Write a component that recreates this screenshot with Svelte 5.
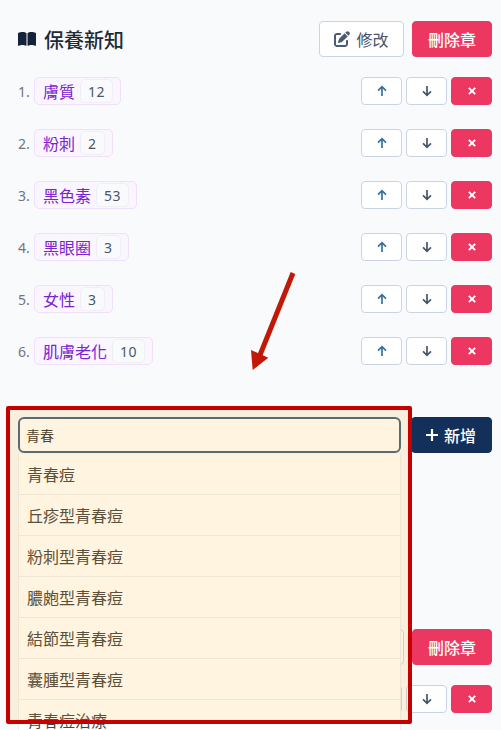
<script>
  const tags = [
    { name: '膚質', n: 12 },
    { name: '粉刺', n: 2 },
    { name: '黑色素', n: 53 },
    { name: '黑眼圈', n: 3 },
    { name: '女性', n: 3 },
    { name: '肌膚老化', n: 10 }
  ];
  const results = ['青春痘', '丘疹型青春痘', '粉刺型青春痘', '膿皰型青春痘', '結節型青春痘', '囊腫型青春痘', '青春痘治療'];
</script>

{#snippet rowButtons()}
  <div class="row-actions">
    <button class="btn small up" aria-label="上移">
      <svg viewBox="0 0 12 12"><path d="M6 11V2M2 5.6 6 1.6l4 4" /></svg>
    </button>
    <button class="btn small down" aria-label="下移">
      <svg viewBox="0 0 12 12"><path d="M6 1v9M2 6.4l4 4 4-4" /></svg>
    </button>
    <button class="btn small danger" aria-label="移除">
      <svg viewBox="0 0 12 12"><path d="M2.2 2.2l7.6 7.6M9.8 2.2l-7.6 7.6" /></svg>
    </button>
  </div>
{/snippet}

{#snippet chapterActions()}
  <div class="chapter-actions">
    <button class="btn edit">
      <svg viewBox="0 0 512 512"><path d="M471.6 21.7c-21.9-21.9-57.3-21.9-79.2 0L362.3 51.7l97.9 97.9 30.1-30.1c21.9-21.9 21.9-57.3 0-79.2L471.6 21.7zm-299.2 220c-6.1 6.1-10.8 13.6-13.5 21.9l-29.6 88.8c-2.9 8.6-.6 18.1 5.8 24.6s15.9 8.7 24.6 5.8l88.8-29.6c8.2-2.7 15.7-7.4 21.9-13.5L437.7 172.3 339.7 74.3 172.4 241.7zM96 64C43 64 0 107 0 160V416c0 53 43 96 96 96H352c53 0 96-43 96-96V320c0-17.7-14.3-32-32-32s-32 14.3-32 32v96c0 17.7-14.3 32-32 32H96c-17.7 0-32-14.3-32-32V160c0-17.7 14.3-32 32-32h96c17.7 0 32-14.3 32-32s-14.3-32-32-32H96z" /></svg>
      修改
    </button>
    <button class="btn danger big">刪除章</button>
  </div>
{/snippet}

<div class="page">
  <section class="chapter">
    <header class="chapter-head">
      <h2>
        <svg viewBox="0 0 576 512"><path d="M249.6 471.5c10.8 3.8 22.4-4.1 22.4-15.5V78.6c0-4.2-1.6-8.4-5-11C247.4 52 202.4 32 144 32C93.5 32 46.3 45.3 18.1 56.1C6.8 60.5 0 71.7 0 83.8V454.1c0 11.9 12.8 20.2 24.1 16.5C55.6 460.1 105.5 448 144 448c33.9 0 79 14 105.6 23.5zm76.8 0C353 462 398.1 448 432 448c38.5 0 88.4 12.1 119.9 22.6c11.3 3.8 24.1-4.6 24.1-16.5V83.8c0-12.1-6.8-23.3-18.1-27.6C529.7 45.3 482.5 32 432 32c-58.4 0-103.4 20-123 35.6c-3.3 2.6-5 6.8-5 11V456c0 11.4 11.7 19.3 22.4 15.5z" /></svg>
        保養新知
      </h2>
      {@render chapterActions()}
    </header>

    <ol class="tags">
      {#each tags as t, i}
        <li class="tag-row">
          <span class="idx">{i + 1}.</span>
          <span class="tag">{t.name}<span class="count">{t.n}</span></span>
          {@render rowButtons()}
        </li>
      {/each}
    </ol>

    <div class="add-row">
      <div class="search">
        <input value="青春" aria-label="搜尋標籤" />
        <ul class="results">
          {#each results as r}
            <li>{r}</li>
          {/each}
        </ul>
      </div>
      <button class="btn add">
        <svg viewBox="0 0 14 14"><path d="M7 1v12M1 7h12" /></svg>
        新增
      </button>
    </div>
  </section>

  <section class="chapter next">
    <header class="chapter-head">
      <h2></h2>
      {@render chapterActions()}
    </header>
    <div class="tag-row"><span class="idx"></span>{@render rowButtons()}</div>
  </section>

  <svg class="pointer" viewBox="0 0 80 120">
    <path d="M63 13 30 95" class="shaft" />
    <path d="M21 90 38.3 97.7 22.7 110Z" class="head" />
  </svg>
  <div class="highlight"></div>
</div>

<style>
  :global(body) {
    margin: 0;
    background: #f9fafc;
  }
  .page {
    position: relative;
    height: 730px;
    overflow: hidden;
    font-family: "Noto Sans", "Noto Sans CJK TC", sans-serif;
    color: #363636;
  }
  .chapter {
    padding: 21px 9px 0 18px;
  }
  .chapter-head {
    display: flex;
    align-items: center;
    justify-content: space-between;
    height: 36px;
  }
  h2 {
    margin: 0;
    display: flex;
    align-items: center;
    gap: 8px;
    font-size: 20px;
    font-weight: 500;
    color: #1f2a37;
  }
  h2 svg {
    width: 18px;
    height: 16px;
    fill: #14233a;
  }
  .chapter-actions {
    display: flex;
    gap: 8px;
  }
  .btn {
    box-sizing: border-box;
    display: inline-flex;
    align-items: center;
    justify-content: center;
    padding: 0;
    border: 1px solid #c9d5e5;
    border-radius: 4px;
    background: #fff;
    font-family: inherit;
    font-size: 16px;
    color: #4a5568;
  }
  .btn.edit {
    width: 85px;
    height: 36px;
    gap: 6px;
  }
  .btn.edit svg {
    width: 16px;
    height: 16px;
    fill: #4a5b73;
  }
  .btn.big {
    width: 80px;
    height: 36px;
    font-weight: 500;
  }
  .btn.danger {
    background: #ec3860;
    border-color: #ec3860;
    color: #fff;
  }
  .tags {
    list-style: none;
    margin: 20px 0 0;
    padding: 0;
  }
  .tag-row {
    display: flex;
    align-items: center;
    height: 28px;
    margin-bottom: 24px;
  }
  .idx {
    width: 16px;
    font-size: 14px;
    color: #6f7682;
  }
  .tag {
    box-sizing: border-box;
    display: inline-flex;
    align-items: center;
    gap: 5px;
    height: 28px;
    padding: 0 7px 0 8px;
    border: 1px solid #f1e0fd;
    border-radius: 5px;
    background: #faf5ff;
    font-size: 16px;
    color: #7c22ce;
  }
  .count {
    box-sizing: border-box;
    display: inline-flex;
    align-items: center;
    justify-content: center;
    height: 24px;
    min-width: 24px;
    padding: 0 7px;
    border: 1px solid #eef0f4;
    border-radius: 5px;
    background: #f9fafc;
    font-size: 14px;
    letter-spacing: .5px;
    color: #4a5568;
  }
  .row-actions {
    display: flex;
    gap: 4px;
    margin-left: auto;
  }
  .btn.small {
    width: 41px;
    height: 28px;
  }
  .btn.small svg {
    width: 12px;
    height: 12px;
    fill: none;
    stroke-width: 1.7;
  }
  .up svg { stroke: #3b7199; }
  .down svg { stroke: #4a5568; }
  .btn.danger svg {
    stroke: #fff;
    width: 10px;
    height: 10px;
    stroke-width: 2.4;
  }
  .add-row {
    display: flex;
    align-items: flex-start;
    gap: 10px;
    margin-top: 52px;
  }
  .search {
    position: relative;
    flex: 1;
  }
  input {
    display: block;
    box-sizing: border-box;
    width: 100%;
    height: 36px;
    padding: 0 6px;
    border: 2px solid #3f6585;
    border-radius: 6px;
    background: #fff;
    outline: none;
    font-family: inherit;
    font-size: 14px;
    color: #363636;
  }
  .results {
    position: absolute;
    z-index: 1;
    left: 0;
    right: 0;
    top: 37px;
    margin: 0;
    padding: 0;
    list-style: none;
    background: #fff;
    border-left: 1px solid #eceff3;
    border-right: 1px solid #eceff3;
  }
  .results li {
    box-sizing: border-box;
    height: 41px;
    padding: 0 8px;
    display: flex;
    align-items: center;
    border-bottom: 1px solid #eceff3;
    font-size: 16px;
    color: #444;
  }
  .btn.add {
    width: 81px;
    height: 36px;
    gap: 5px;
    padding-right: 2px;
    background: #12305a;
    border-color: #12305a;
    color: #fff;
    font-weight: 500;
  }
  .btn.add svg {
    width: 14px;
    height: 14px;
    fill: none;
    stroke: #fff;
    stroke-width: 2.2;
  }
  .next {
    margin-top: 176px;
    padding-top: 0;
  }
  .next .chapter-head {
    margin-bottom: 20px;
  }
  .pointer {
    position: absolute;
    z-index: 2;
    left: 230px;
    top: 260px;
    width: 80px;
    height: 120px;
  }
  .shaft {
    stroke: #c21807;
    stroke-width: 5;
    fill: none;
  }
  .head {
    fill: #c21807;
  }
  .highlight {
    position: absolute;
    z-index: 3;
    box-sizing: border-box;
    left: 6px;
    top: 406px;
    width: 406px;
    height: 318px;
    border: 4px solid #c40000;
    border-radius: 2px;
    background: rgba(255, 170, 0, .125);
    pointer-events: none;
  }
</style>
